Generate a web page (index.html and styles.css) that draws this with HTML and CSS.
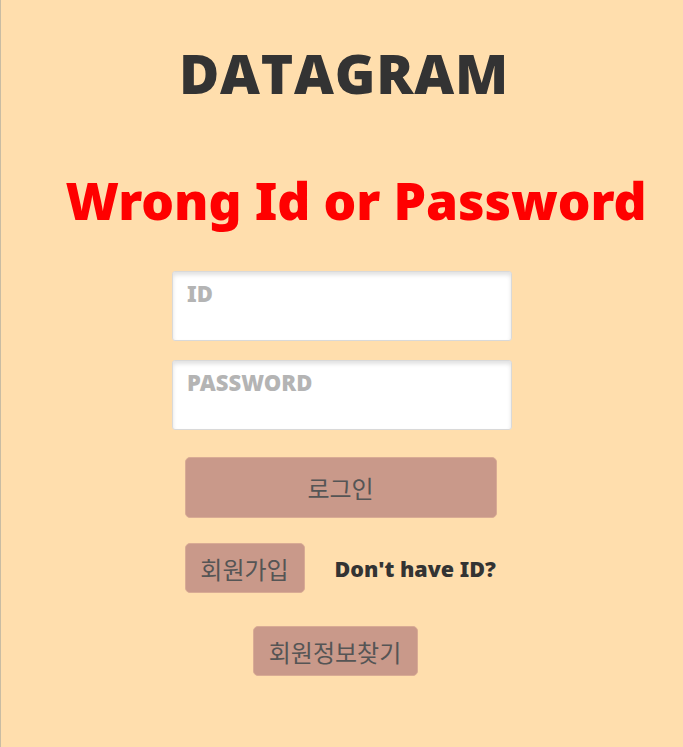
FILE: index.html
```html
<!DOCTYPE html>
<html lang="ko">
<head>
<meta charset="utf-8">
<title>DATAGRAM</title>
<link rel="stylesheet" href="styles.css">
</head>
<body>
<div class="page">
  <h1 class="logo">DATAGRAM</h1>
  <p class="error">Wrong Id or Password</p>
  <form class="login-form">
    <input class="field" type="text" placeholder="ID">
    <input class="field" type="password" placeholder="PASSWORD">
    <button class="btn btn-login" type="button">로그인</button>
    <div class="signup-row">
      <button class="btn btn-small btn-join" type="button">회원가입</button>
      <span class="hint">Don't have ID?</span>
    </div>
    <button class="btn btn-small btn-find" type="button">회원정보찾기</button>
  </form>
</div>
</body>
</html>
```

FILE: styles.css
```css
html, body {
  margin: 0;
  padding: 0;
  background: #ffdead;
}
body {
  font-family: "Noto Sans", "Noto Sans CJK KR", sans-serif;
}
.page {
  min-height: 100vh;
  box-sizing: border-box;
  border-left: 1px solid #c9bca3;
  display: flex;
  flex-direction: column;
  align-items: center;
  padding-top: 38px;
}
.logo {
  margin: 0 0 0 4px;
  font-family: "Open Sans", "Noto Sans", sans-serif;
  font-weight: 800;
  font-size: 55px;
  line-height: 70px;
  color: #333333;
  letter-spacing: 0.8px;
}
.error {
  margin: 62px 0 0 28px;
  font-family: "Noto Sans", sans-serif;
  font-weight: 900;
  font-size: 51.5px;
  line-height: 60px;
  color: #ff0000;
  letter-spacing: -0.1px;
}
.login-form {
  margin-top: 41px;
  display: flex;
  flex-direction: column;
  align-items: center;
}
.field {
  box-sizing: border-box;
  width: 340px;
  height: 70px;
  margin: 0 0 19px;
  padding: 4px 14px 30px;
  border: 1px solid #d9d9d9;
  border-radius: 3px;
  background: #ffffff;
  box-shadow: inset 0 3px 4px rgba(0, 0, 0, 0.12);
  font-family: "Noto Sans", sans-serif;
  font-weight: 900;
  font-size: 22px;
  color: #333;
  outline: none;
}
.field::placeholder {
  color: #b4b4b4;
}
.btn {
  box-sizing: border-box;
  border: 1px solid #d9ab94;
  border-radius: 5px;
  background: #c9998a;
  color: #555555;
  font-family: "Noto Sans CJK KR", sans-serif;
  font-weight: 400;
  padding: 0;
  cursor: pointer;
}
.btn-login {
  width: 312px;
  height: 61px;
  margin-top: 8px;
  margin-left: -3px;
  font-size: 24px;
}
.signup-row {
  width: 312px;
  margin-left: -3px;
  margin-top: 25px;
  display: flex;
  align-items: center;
  gap: 30px;
}
.btn-small {
  height: 50px;
  font-size: 24px;
}
.btn-join {
  width: 120px;
}
.hint {
  font-family: "Noto Sans", sans-serif;
  font-weight: 900;
  font-size: 21.5px;
  color: #333333;
}
.btn-find {
  width: 165px;
  margin-top: 33px;
  margin-left: -14px;
}
```
